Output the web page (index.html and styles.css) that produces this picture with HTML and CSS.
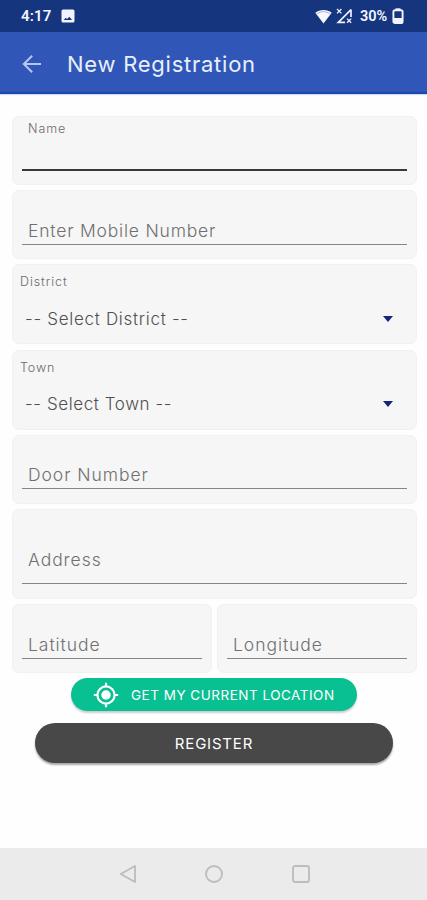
FILE: index.html
```html
<!DOCTYPE html>
<html lang="en">
<head>
  <meta charset="UTF-8" />
  <meta name="viewport" content="width=device-width, initial-scale=1.0"/>
  <title>New Registration</title>
  <link rel="stylesheet" href="styles.css">
</head>
<body>
  <div class="statusbar">
    <span class="time">4:17</span>
    <svg class="picture" width="14" height="14" viewBox="0 0 14 14">
      <rect x="0.5" y="0.5" width="13" height="13" rx="1.5" fill="#f1f3fd"/>
      <path d="M2.8 11l1.9-2.3 1.4 1.4 2.2-2.3 2.8 3.2z" fill="#16357f"/>
    </svg>
    <div class="status-right">
      <svg class="wifi" width="17" height="15" viewBox="0 0 17 15">
        <path d="M0.3 3.8C5 0 12 0 16.7 3.8L8.5 14.5z" fill="#f7f8ff"/>
        <path d="M1.8 5C6 1.9 11 1.9 15.2 5" fill="none" stroke="#8d9dcb" stroke-width="0.8"/>
      </svg>
      <svg class="signal" width="17" height="16" viewBox="0 0 17 16">
        <path d="M15 1.6V9M15 1.6L2.3 14.3H9" fill="none" stroke="#eef1ff" stroke-width="1.7"/>
        <path d="M1 1l4.4 4.4M5.4 1L1 5.4M11 10.6l4.2 4.2M15.2 10.6L11 14.8" stroke="#eef1ff" stroke-width="1.3"/>
      </svg>
      <span class="percent">30%</span>
      <svg class="battery" width="12" height="16" viewBox="0 0 12 16">
        <path d="M3.5 0.3h5v2h-5z" fill="#f1f3fd"/>
        <rect x="1.4" y="2.2" width="9.2" height="12.8" rx="1.6" fill="none" stroke="#f1f3fd" stroke-width="1.9"/>
        <path d="M1.5 10h9v5h-9z" fill="#f1f3fd"/>
      </svg>
    </div>
  </div>

  <header class="appbar">
    <svg class="back" width="20" height="20" viewBox="0 0 20 20">
      <path d="M19 10H2M10.2 1.7L1.8 10l8.4 8.3" fill="none" stroke="#b5c6f0" stroke-width="2"/>
    </svg>
    <h1>New Registration</h1>
  </header>

  <main class="form">
    <div class="card focused">
      <label class="small-label">Name</label>
      <div class="line"></div>
    </div>
    <div class="card">
      <div class="line mobile">Enter Mobile Number</div>
    </div>
    <div class="card select-card">
      <label class="small-label">District</label>
      <div class="select"><span>-- Select District --</span><i class="caret"></i></div>
    </div>
    <div class="card select-card">
      <label class="small-label">Town</label>
      <div class="select town"><span>-- Select Town --</span><i class="caret"></i></div>
    </div>
    <div class="card door-card">
      <div class="line">Door Number</div>
    </div>
    <div class="card address-card">
      <div class="line">Address</div>
    </div>
    <div class="row">
      <div class="card">
        <div class="line">Latitude</div>
      </div>
      <div class="card">
        <div class="line">Longitude</div>
      </div>
    </div>

    <button class="location">
      <svg width="26" height="26" viewBox="0 0 26 26">
        <circle cx="13" cy="13" r="8.6" fill="none" stroke="#fff" stroke-width="2.2"/>
        <circle cx="13" cy="13" r="4.7" fill="#fff"/>
        <path d="M13 0.8V5M13 21v4.2M0.8 13H5M21 13h4.2" stroke="#fff" stroke-width="2.2"/>
      </svg>
      <span>GET MY CURRENT LOCATION</span>
    </button>
    <button class="register"><span>REGISTER</span></button>
  </main>

  <nav class="navbar">
    <svg width="18" height="20" viewBox="0 0 18 20">
      <path d="M16 2v16L1.8 10z" fill="none" stroke="#bcbcbc" stroke-width="1.8" stroke-linejoin="round"/>
    </svg>
    <svg width="20" height="20" viewBox="0 0 20 20">
      <circle cx="10" cy="10" r="8" fill="none" stroke="#bcbcbc" stroke-width="1.8"/>
    </svg>
    <svg width="20" height="20" viewBox="0 0 20 20">
      <rect x="2" y="2" width="16" height="16" rx="2" fill="none" stroke="#bcbcbc" stroke-width="1.8"/>
    </svg>
  </nav>
</body>
</html>
```
FILE: styles.css
```css
* {
  box-sizing: border-box;
}

body {
  margin: 0;
  height: 900px;
  display: flex;
  flex-direction: column;
  background-color: #fefefe;
  font-family: Inter, "Liberation Sans", sans-serif;
  overflow: hidden;
}

svg {
  display: block;
  flex: none;
}

.statusbar {
  height: 32px;
  background-color: #16357f;
  color: #f3f5ff;
  display: flex;
  align-items: center;
  padding: 0 23px 0 21px;
  font-family: Roboto, sans-serif;
  font-size: 15px;
  font-weight: 600;
}

.time {
  width: 40px;
  letter-spacing: 0.2px;
}

.status-right {
  display: flex;
  align-items: center;
  margin-left: auto;
}

.signal {
  margin: 0 7px 0 4px;
}

.percent {
  width: 32px;
  font-size: 14.5px;
  white-space: nowrap;
}

.appbar {
  height: 62px;
  background-color: #3057b7;
  border-bottom: 2px solid #174ba9;
  box-shadow: 0 1px 1px #cfd9f0;
  display: flex;
  align-items: center;
  padding: 3px 0 0 22px;
}

h1 {
  margin: 0 0 0 25px;
  color: #e9effc;
  font-size: 22px;
  font-weight: 400;
  letter-spacing: 0.75px;
  white-space: nowrap;
}

.form {
  flex: 1;
  display: flex;
  flex-direction: column;
  padding: 22px 10px 0 12px;
}

.card {
  height: 68.5px;
  margin-bottom: 5.5px;
  padding: 0 9px 13px;
  background-color: #f6f6f6;
  border: 1px solid #f1f1f1;
  border-radius: 7px;
  display: flex;
  flex-direction: column;
}

.small-label {
  color: #6c6c6c;
  font-size: 12.5px;
  font-weight: 300;
  line-height: 16px;
  letter-spacing: 0.9px;
  padding: 4px 0 0 6px;
}

.line {
  margin-top: auto;
  height: 28px;
  padding-left: 6px;
  border-bottom: 1px solid #858585;
  color: #707070;
  font-size: 17.5px;
  font-weight: 300;
  line-height: 28px;
  letter-spacing: 0.95px;
  white-space: nowrap;
}

.mobile {
  letter-spacing: 0.8px;
}

.focused .line {
  border-bottom: 2px solid #3c3638;
}

.select-card {
  height: 80px;
}

.select-card .small-label {
  padding: 9px 0 0;
  margin-left: -2px;
}

.select {
  display: flex;
  align-items: center;
  height: 24px;
  margin-top: 17px;
  padding: 0 14px 0 3px;
  color: #505050;
  font-size: 17px;
  font-weight: 300;
  letter-spacing: 0.7px;
}

.town {
  letter-spacing: 0.58px;
}

.caret {
  margin-left: auto;
  border: 5px solid transparent;
  border-top: 6px solid #14257a;
  border-bottom: 0;
}

.door-card {
  padding-bottom: 14px;
}

.address-card {
  height: 89.5px;
  padding-bottom: 14px;
}

.address-card .line {
  height: 38px;
}

.row {
  display: grid;
  grid-template-columns: 1fr 1fr;
  gap: 5px;
}

.location,
.register {
  display: flex;
  align-items: center;
  border: none;
  color: #fff;
  font-family: inherit;
  white-space: nowrap;
}

.location {
  width: 286px;
  height: 33px;
  margin-left: 59px;
  padding: 0 0 0 22px;
  border-radius: 17px;
  background-color: #09c092;
  box-shadow: 0 2px 2px rgba(0, 0, 0, 0.2);
  gap: 12px;
  font-size: 13.5px;
  letter-spacing: 0.5px;
}

.register {
  width: 358px;
  height: 40px;
  margin: 12px 0 0 23px;
  padding: 0;
  justify-content: center;
  border-radius: 20px;
  background-color: #484848;
  box-shadow: 0 2px 2px rgba(0, 0, 0, 0.35);
  font-size: 15px;
  letter-spacing: 0.8px;
}

.navbar {
  height: 52px;
  background-color: #ebebeb;
  display: flex;
  align-items: center;
  justify-content: center;
  gap: 67px;
  padding-left: 2px;
}
```
